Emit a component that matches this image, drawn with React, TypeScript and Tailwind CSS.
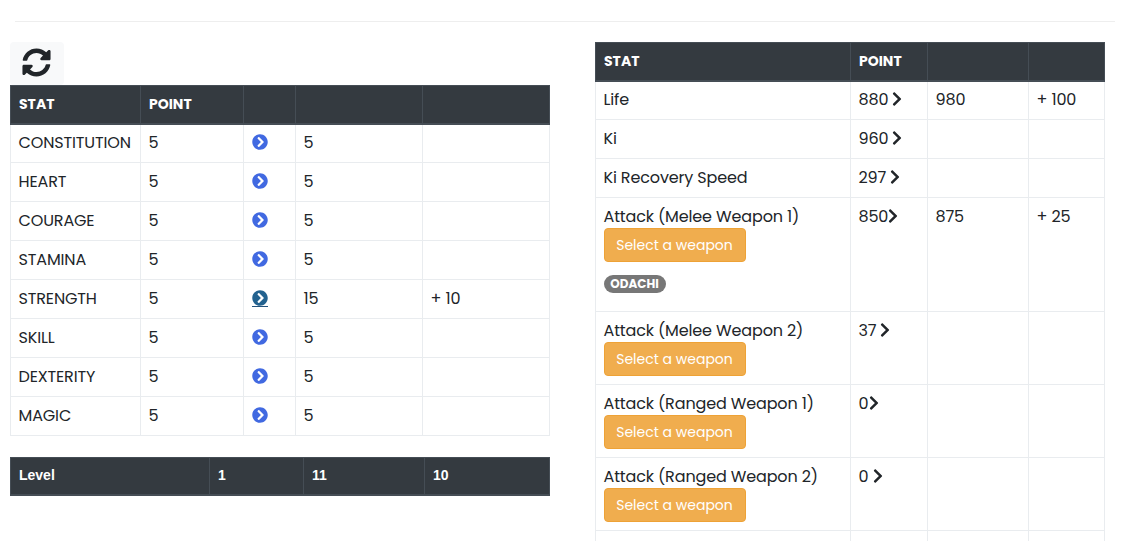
import React from "react";

const Chev = ({ ml = 4 }: { ml?: number }) => (
  <svg viewBox="0 0 320 512" width={10} height={16} style={{ marginLeft: ml }} className="inline-block align-[-2px]" fill="#212529">
    <path d="M285.476 272.971L91.132 467.314c-9.373 9.373-24.569 9.373-33.941 0l-22.667-22.667c-9.357-9.357-9.375-24.522-.04-33.901L188.505 256 34.484 101.255c-9.335-9.379-9.317-24.544.04-33.901l22.667-22.667c9.373-9.373 24.569-9.373 33.941 0L285.475 239.03c9.373 9.372 9.373 24.568.001 33.941z" />
  </svg>
);

const Circle = ({ active = false }: { active?: boolean }) => (
  <span className={`inline-flex h-[18px] items-center -mt-[2px] ${active ? "border-b border-[#23527c]" : ""}`}>
    <svg viewBox="0 0 512 512" width={16} height={16} fill={active ? "#23628f" : "#4169e1"} className="block">
      <path d="M256 8c137 0 248 111 248 248S393 504 256 504 8 393 8 256 119 8 256 8zm113.9 231L234.4 103.5c-9.4-9.4-24.6-9.4-33.9 0l-17 17c-9.4 9.4-9.4 24.6 0 33.9L285.1 256 183.5 357.6c-9.4 9.4-9.4 24.6 0 33.9l17 17c9.4 9.4 24.6 9.4 33.9 0L369.9 273c9.4-9.4 9.4-24.6 0-34z" />
    </svg>
  </span>
);

const Btn = () => (
  <button className="block -mt-px h-[34px] w-[142px] rounded-[4px] bg-[#f0ad4e] border border-[#eea236] text-white text-[14px] tracking-normal">Select a weapon</button>
);

const left = ["CONSTITUTION", "HEART", "COURAGE", "STAMINA", "STRENGTH", "SKILL", "DEXTERITY", "MAGIC"];

const td = "border border-[#e9ecef] pl-[7.5px] pr-1 align-top pt-[7px] tracking-[-0.14px]";
const tdFirst = "border border-[#e9ecef] pl-[7.5px] pr-1 align-top pt-[6px] tracking-[-0.14px]";
const th = "border border-[#454d55] border-b-2 bg-[#343a40] text-white text-left font-bold pl-2 pr-2 text-[14px]";
const thLevel = "border border-[#454d55] border-b-2 bg-[#343a40] text-white text-left font-bold pl-2 pr-2 pb-[2px] text-[14px]";
const arial = { fontFamily: "'Liberation Sans', sans-serif" };

export default function App() {
  return (
    <div className="w-[1125px] h-[541px] overflow-hidden bg-white text-[#212529] text-[16px] leading-[24px]" style={{ fontFamily: "Poppins, Lato, 'Open Sans', sans-serif" }}>
      <div className="ml-[15px] w-[1100px] h-[22px] border-b border-[#eeeeee]" />
      <div className="flex pl-[10px] pt-[20px]">
        <div className="w-[540px] shrink-0">
          <div className="w-[54px] h-[43px] rounded-[4px] bg-[#f8f9fa] flex items-center justify-center pb-[2px] pr-[2px]">
            <svg viewBox="0 0 512 512" width={29} height={29} fill="#212529">
              <path d="M370.72 133.28C339.458 104.008 298.888 87.962 255.848 88c-77.458.068-144.328 53.178-162.791 126.85-1.344 5.363-6.122 9.15-11.651 9.15H24.103c-7.498 0-13.194-6.807-11.807-14.176C33.933 94.924 134.813 8 256 8c66.448 0 126.791 26.136 171.315 68.685L463.03 40.97C478.149 25.851 504 36.559 504 57.941V192c0 13.255-10.745 24-24 24H345.941c-21.382 0-32.09-25.851-16.971-40.971l41.75-41.749zM32 296h134.059c21.382 0 32.09 25.851 16.971 40.971l-41.75 41.75c31.262 29.273 71.835 45.319 114.876 45.28 77.418-.07 144.315-53.144 162.787-126.849 1.344-5.363 6.122-9.15 11.651-9.15h57.304c7.498 0 13.194 6.807 11.807 14.176C478.067 417.076 377.187 504 256 504c-66.448 0-126.791-26.136-171.315-68.685L48.97 471.03C33.851 486.149 8 475.441 8 454.059V320c0-13.255 10.745-24 24-24z" />
            </svg>
          </div>
          <table className="w-[540px] table-fixed border-collapse">
            <thead>
              <tr className="h-[38px]">
                <th className={`${th} w-[130px]`}>STAT</th>
                <th className={`${th} w-[103px]`}>POINT</th>
                <th className={`${th} w-[52px]`}></th>
                <th className={`${th} w-[127px]`}></th>
                <th className={th}></th>
              </tr>
            </thead>
            <tbody>
              {left.map((s, i) => {
                const c = i === 0 ? tdFirst : td;
                return (
                  <tr key={s} className="h-[39px]">
                    <td className={c}>{s}</td>
                    <td className={c}>5</td>
                    <td className={c}><span className="flex h-[24px] items-center"><Circle active={s === "STRENGTH"} /></span></td>
                    <td className={c}>{s === "STRENGTH" ? "15" : "5"}</td>
                    <td className={c}>{s === "STRENGTH" ? "+ 10" : ""}</td>
                  </tr>
                );
              })}
            </tbody>
          </table>
          <table className="mt-[21px] w-[540px] table-fixed border-collapse">
            <tbody>
              <tr className="h-[37px]">
                <td className={`${thLevel} w-[199px]`} style={arial}>Level</td>
                <td className={`${thLevel} w-[94px]`} style={arial}>1</td>
                <td className={`${thLevel} w-[121px]`} style={arial}>11</td>
                <td className={thLevel} style={arial}>10</td>
              </tr>
            </tbody>
          </table>
        </div>
        <div className="ml-[45px] w-[510px] shrink-0">
          <table className="w-[510px] table-fixed border-collapse">
            <thead>
              <tr className="h-[38px]">
                <th className={`${th} w-[255px]`}>STAT</th>
                <th className={`${th} w-[77px]`}>POINT</th>
                <th className={`${th} w-[101px]`}></th>
                <th className={th}></th>
              </tr>
            </thead>
            <tbody>
              <tr className="h-[39px]"><td className={tdFirst}>Life</td><td className={tdFirst}>880<Chev /></td><td className={tdFirst}>980</td><td className={tdFirst}>+ 100</td></tr>
              <tr className="h-[39px]"><td className={td}>Ki</td><td className={td}>960<Chev /></td><td className={td}></td><td className={td}></td></tr>
              <tr className="h-[39px]"><td className={td}>Ki Recovery Speed</td><td className={td}>297<Chev /></td><td className={td}></td><td className={td}></td></tr>
              <tr className="h-[114px]">
                <td className={td}>
                  Attack (Melee Weapon 1)
                  <Btn />
                  <span className="mt-[13px] mb-[14px] block w-[62px] h-[18px] rounded-full bg-[#777777] text-white text-[12px] font-bold leading-[18px] text-center tracking-normal">ODACHI</span>
                </td>
                <td className={td}>850<Chev ml={0} /></td><td className={td}>875</td><td className={td}>+ 25</td>
              </tr>
              <tr className="h-[73px]"><td className={td}>Attack (Melee Weapon 2)<Btn /></td><td className={td}>37<Chev /></td><td className={td}></td><td className={td}></td></tr>
              <tr className="h-[73px]"><td className={td}>Attack (Ranged Weapon 1)<Btn /></td><td className={td}>0<Chev ml={1} /></td><td className={td}></td><td className={td}></td></tr>
              <tr className="h-[73px]"><td className={td}>Attack (Ranged Weapon 2)<Btn /></td><td className={td}>0<Chev ml={5} /></td><td className={td}></td><td className={td}></td></tr>
              <tr className="h-[39px]"><td className={td}>&nbsp;</td><td className={td}></td><td className={td}></td><td className={td}></td></tr>
            </tbody>
          </table>
        </div>
      </div>
    </div>
  );
}
